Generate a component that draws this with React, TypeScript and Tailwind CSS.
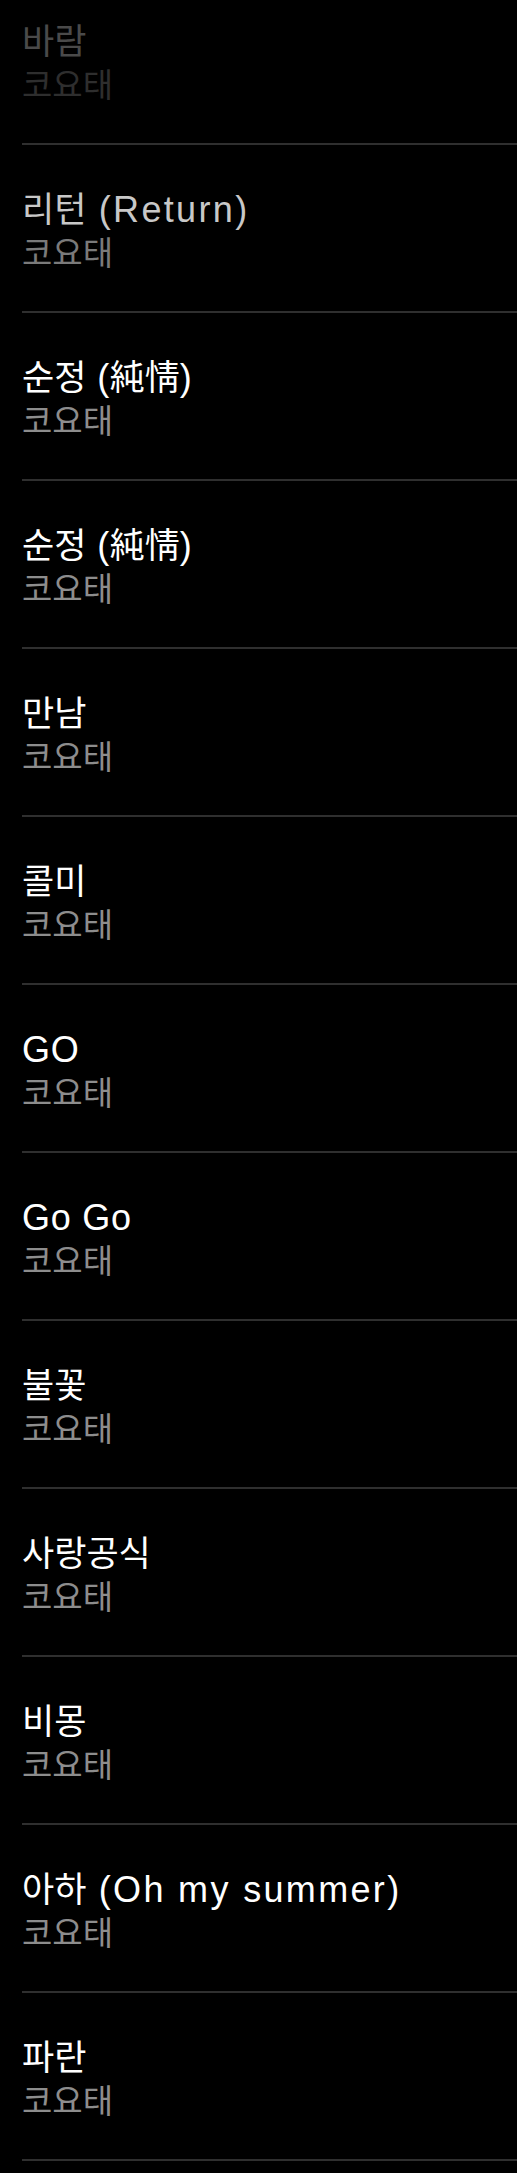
import React from "react";

const rows = [
  "바람",
  "리턴 (Return)",
  "순정 (純情)",
  "순정 (純情)",
  "만남",
  "콜미",
  "GO",
  "Go Go",
  "불꽃",
  "사랑공식",
  "비몽",
  "아하 (Oh my summer)",
  "파란",
];

function Title({ text }: { text: string }) {
  const parts = text.split(/([\u3131-\uD79D\u4E00-\u9FFF]+)/).filter((p) => p.length > 0);
  return (
    <>
      {parts.map((p, i) =>
        /[\u3131-\uD79D\u4E00-\u9FFF]/.test(p) ? (
          <span key={i}>{p}</span>
        ) : (
          <span
            key={i}
            className={
              /[a-z]{3,}/.test(p)
                ? "text-[36px] tracking-[0.065em]"
                : "text-[36px] tracking-[0.02em]"
            }
            style={{ fontFamily: '"Liberation Sans", sans-serif' }}
          >
            {p}
          </span>
        )
      )}
    </>
  );
}

export default function App() {
  return (
    <div
      className="min-h-[2173px] w-full overflow-hidden bg-black"
      style={{ fontFamily: '"Noto Sans CJK KR", sans-serif' }}
    >
      <div className="mt-[-23px] pl-[22px]">
        {rows.map((t, i) => {
          const titleColor =
            i === 0 ? "text-[#4a4a4a]" : i === 1 ? "text-[#c8c8c8]" : "text-white";
          const subColor =
            i === 0 ? "text-[#2e2e2e]" : i === 1 ? "text-[#7a7a7a]" : "text-[#8d8d8d]";
          return (
            <div
              key={i}
              className="flex h-[168px] flex-col border-b-2 border-[#2f2f2f] pt-[40px]"
            >
              <div
                className={`h-[44px] whitespace-nowrap text-[35px] leading-[44px] ${titleColor}`}
              >
                <Title text={t} />
              </div>
              <div className={`mt-[2px] text-[33px] leading-[40px] ${subColor}`}>코요태</div>
            </div>
          );
        })}
      </div>
    </div>
  );
}
